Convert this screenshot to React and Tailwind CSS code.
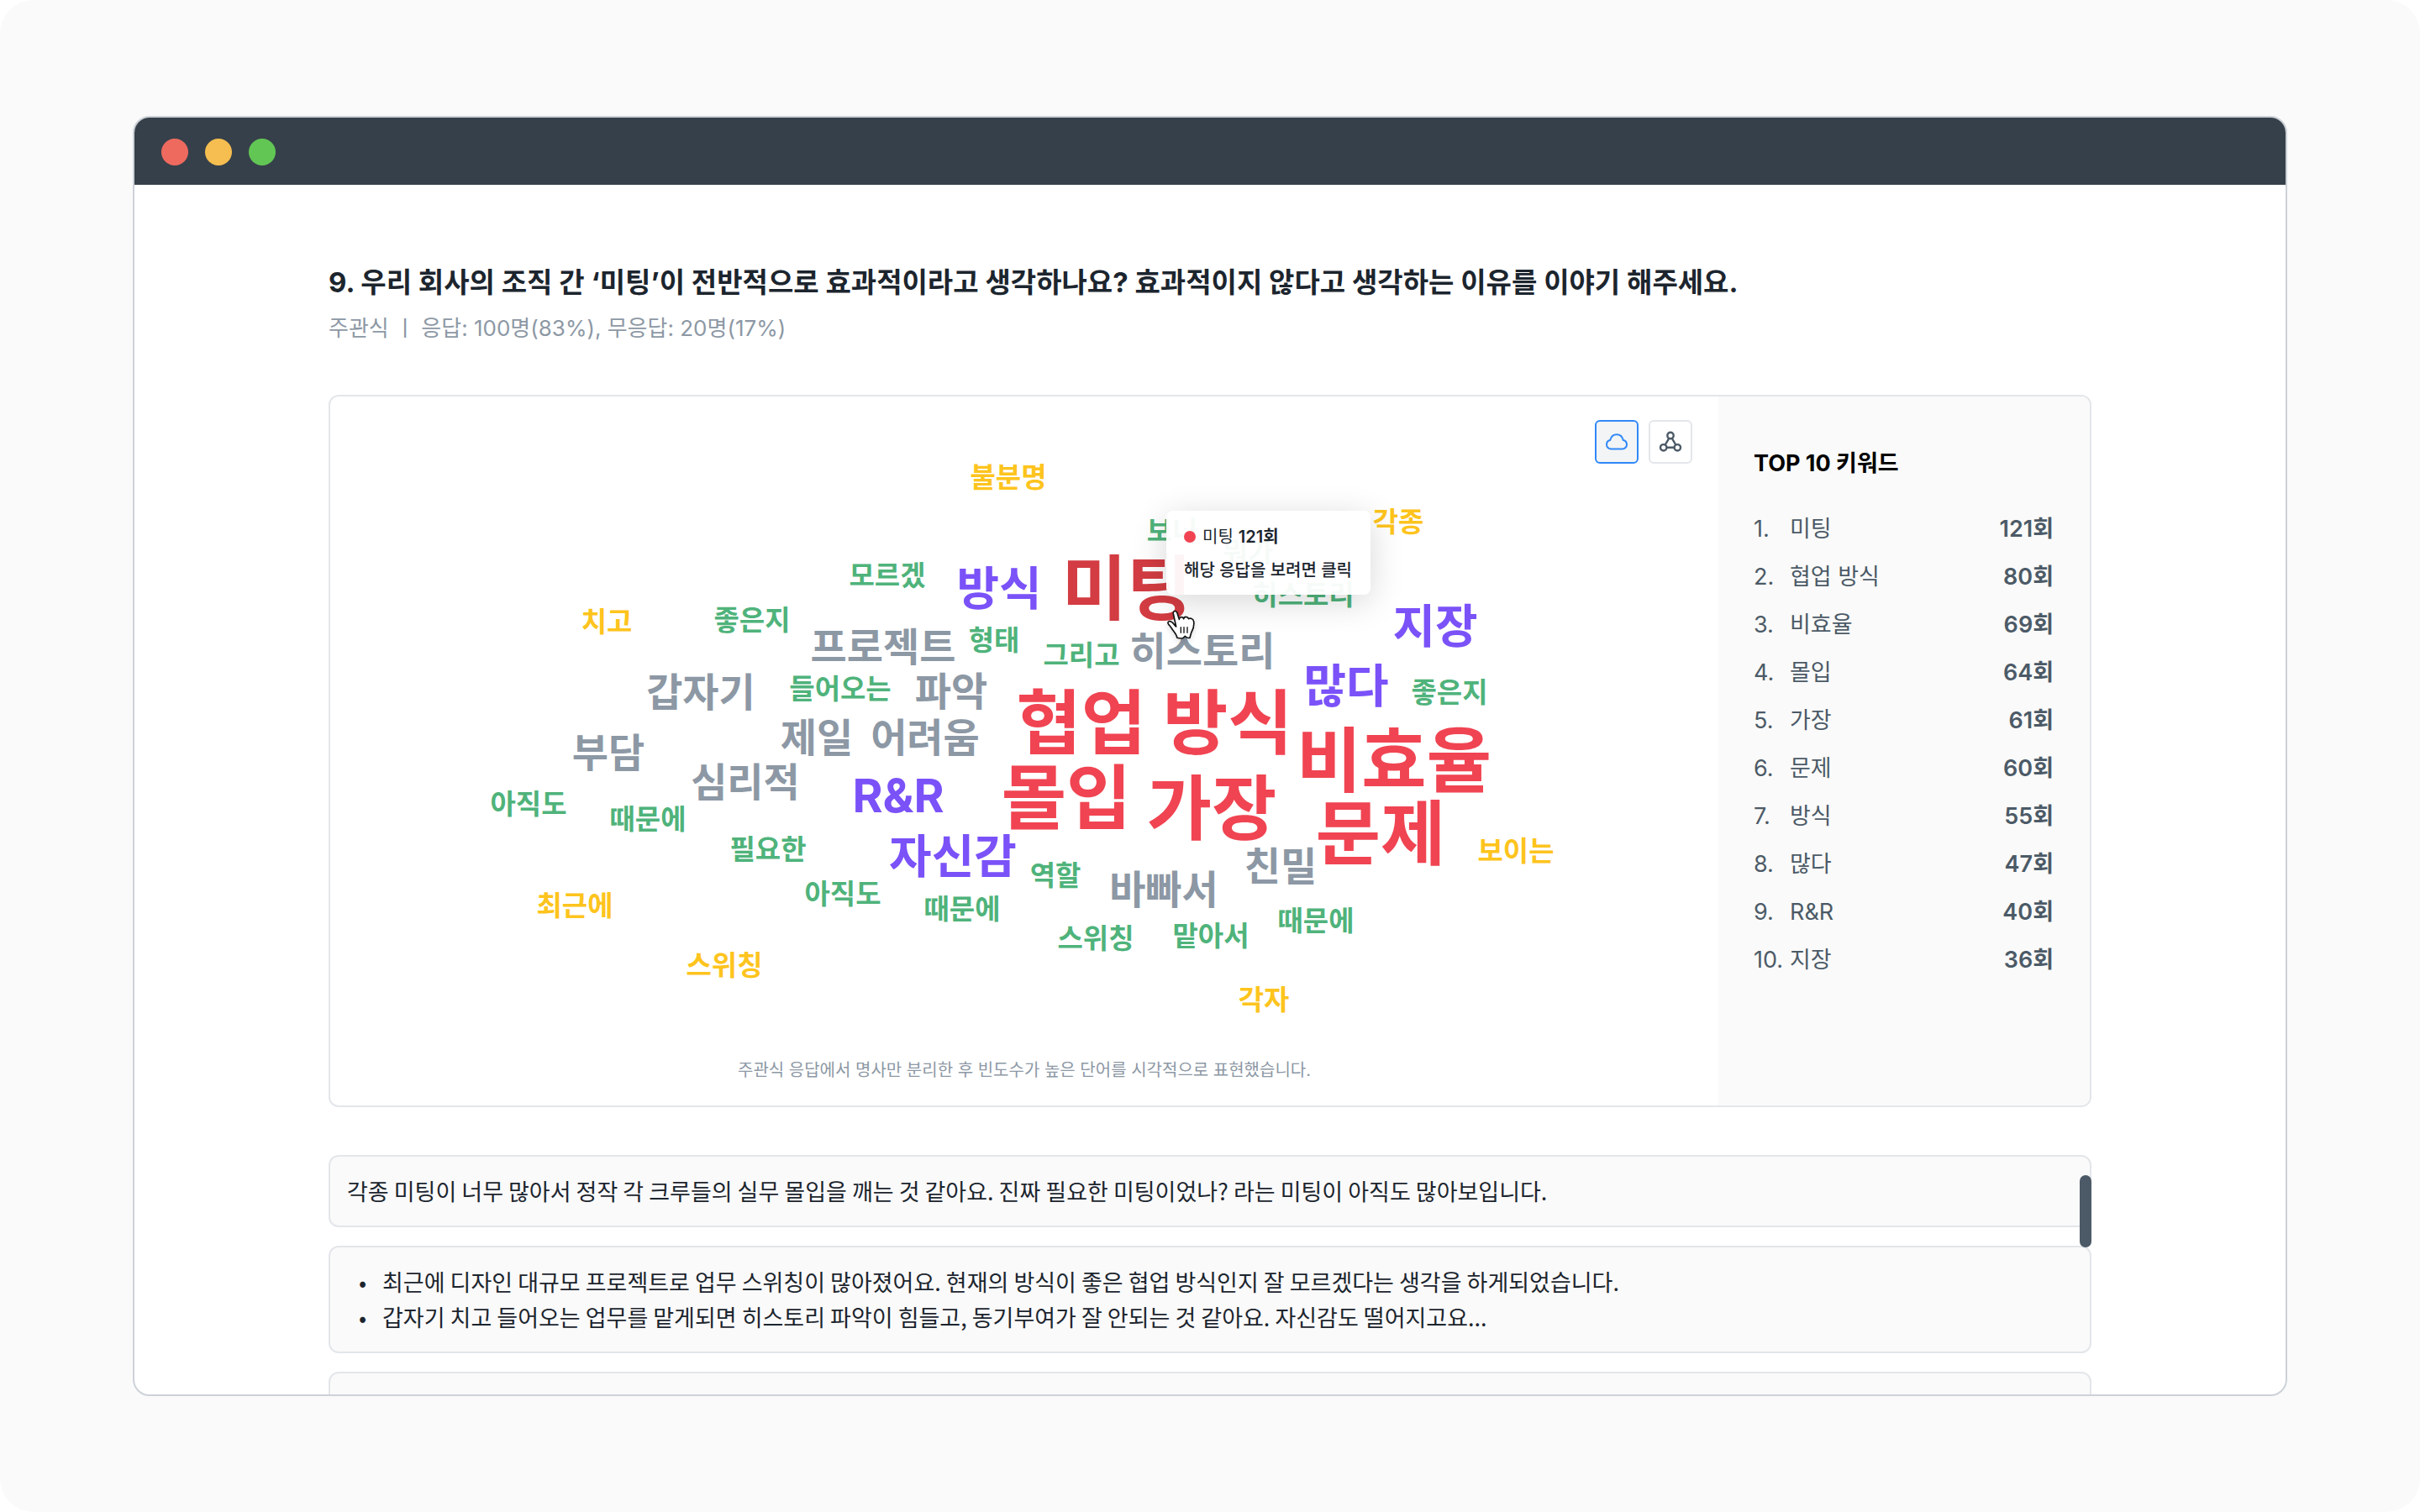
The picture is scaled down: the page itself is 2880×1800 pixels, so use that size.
import React, { useState } from 'react';

const WORD_STYLES = {
    red: 'text-[84px] text-[#f04452]',
    hover: 'text-[84px] text-[#d23c42]',
    purple: 'text-[55px] text-[#7a52f8]',
    gray: 'text-[47px] text-[#8d98a5]',
    green: 'text-[33px] text-[#4fb37b]',
    yellow: 'text-[33px] text-[#fec41d]',
};

// x is measured from the middle of the canvas, y from its top
const WORDS = [
    { text: '불분명', kind: 'yellow', x: -19, y: 96 },
    { text: '보니', kind: 'green', x: 176, y: 160 },
    { text: '뭐가', kind: 'green', x: 266, y: 185 },
    { text: '각종', kind: 'yellow', x: 445, y: 149 },
    { text: '히스토리', kind: 'green', x: 332, y: 236 },
    { text: '모르겠', kind: 'green', x: -163, y: 213 },
    { text: '좋은지', kind: 'green', x: -324, y: 266 },
    { text: '치고', kind: 'yellow', x: -497, y: 268 },
    { text: '형태', kind: 'green', x: -36, y: 290 },
    { text: '그리고', kind: 'green', x: 68, y: 308 },
    { text: '들어오는', kind: 'green', x: -219, y: 348 },
    { text: '좋은지', kind: 'green', x: 506, y: 352 },
    { text: '아직도', kind: 'green', x: -590, y: 485 },
    { text: '때문에', kind: 'green', x: -448, y: 503 },
    { text: '필요한', kind: 'green', x: -305, y: 539 },
    { text: '아직도', kind: 'green', x: -216, y: 592 },
    { text: '때문에', kind: 'green', x: -74, y: 610 },
    { text: '역할', kind: 'green', x: 37, y: 570 },
    { text: '스위칭', kind: 'green', x: 85, y: 645 },
    { text: '맡아서', kind: 'green', x: 222, y: 642 },
    { text: '때문에', kind: 'green', x: 347, y: 624 },
    { text: '최근에', kind: 'yellow', x: -535, y: 606 },
    { text: '스위칭', kind: 'yellow', x: -357, y: 677 },
    { text: '보이는', kind: 'yellow', x: 585, y: 541 },
    { text: '각자', kind: 'yellow', x: 285, y: 718 },
    { text: '프로젝트', kind: 'gray', x: -168, y: 297 },
    { text: '갑자기', kind: 'gray', x: -385, y: 351 },
    { text: '파악', kind: 'gray', x: -87, y: 350 },
    { text: '제일', kind: 'gray', x: -247, y: 405 },
    { text: '어려움', kind: 'gray', x: -118, y: 405 },
    { text: '부담', kind: 'gray', x: -495, y: 423 },
    { text: '심리적', kind: 'gray', x: -332, y: 458 },
    { text: '히스토리', kind: 'gray', x: 212, y: 302 },
    { text: '바빠서', kind: 'gray', x: 166, y: 586 },
    { text: '친밀', kind: 'gray', x: 305, y: 558 },
    { text: '방식', kind: 'purple', x: -30, y: 228 },
    { text: '지장', kind: 'purple', x: 489, y: 273 },
    { text: '많다', kind: 'purple', x: 383, y: 344 },
    { text: 'R&R', kind: 'purple', x: -150, y: 475 },
    { text: '자신감', kind: 'purple', x: -85, y: 547 },
    { text: '미팅', kind: 'hover', x: 122, y: 229 },
    { text: '협업 방식', kind: 'red', x: 155, y: 389 },
    { text: '비효율', kind: 'red', x: 440, y: 434 },
    { text: '몰입', kind: 'red', x: 50, y: 478 },
    { text: '가장', kind: 'red', x: 223, y: 491 },
    { text: '문제', kind: 'red', x: 424, y: 521 },
];

const KEYWORDS = [
    { name: '미팅', count: 121 },
    { name: '협업 방식', count: 80 },
    { name: '비효율', count: 69 },
    { name: '몰입', count: 64 },
    { name: '가장', count: 61 },
    { name: '문제', count: 60 },
    { name: '방식', count: 55 },
    { name: '많다', count: 47 },
    { name: 'R&R', count: 40 },
    { name: '지장', count: 36 },
];

function CloudIcon() {
    return (
        <svg width="28" height="28" viewBox="0 0 28 28" fill="none" stroke="currentColor" strokeWidth="2" strokeLinejoin="round">
            <path d="M7.500 22.500A5.300 5.300 0 0 1 2 17.200c0-2.700 1.700-4.800 4.200-5.300C7.300 8 10.300 5.300 14 5.300s6.700 2.700 7.800 6.600c2.500.5 4.200 2.600 4.200 5.300a5.300 5.300 0 0 1-5.500 5.300z" />
        </svg>
    );
}

function NetworkIcon() {
    return (
        <svg width="28" height="28" viewBox="0 0 28 28" fill="none" stroke="currentColor" strokeWidth="2.400">
            <circle cx="14" cy="6.500" r="3.700" />
            <circle cx="5.700" cy="20.800" r="3.700" />
            <circle cx="22.300" cy="20.800" r="3.700" />
            <path d="M12.200 9.800 7.700 17.500M15.800 9.800l4.500 7.700M9.500 20.800h9" />
        </svg>
    );
}

function HandCursor() {
    return (
        <svg width="34" height="36" viewBox="0 0 102 108" fill="none" stroke="#111" strokeWidth="5" strokeLinejoin="round" strokeLinecap="round" className="drop-shadow-md">
            <path
                d="M32 60 22 14C20 3 32 1 36 11l7 23c0-9 13-11 16-2 1-9 14-9 18 0 5-4 17 0 18 10 3 18-3 28-9 40l-5 18c-8 2-12 0-17-6-4 6-8 8-12 8s-10 0-16-2c-2-12-10-20-16-28C14 62 8 56 4 50c-4-8 4-12 12-7 6 4 10 11 16 17z"
                fill="#fff"
            />
            <path d="M49 62v20M60 62v20M72 62v20" strokeWidth="4" />
        </svg>
    );
}

function Tooltip() {
    return (
        <div className="absolute top-[136px] left-1/2 ml-[169px] flex h-[100px] w-[243px] flex-col justify-center rounded-lg bg-white/95 px-[21px] pt-[2px] text-[20px] text-[#1c252e] shadow-[0_8px_40px_rgba(0,0,0,0.16)]">
            <div className="flex h-10 items-center">
                <span className="mr-2 size-[14px] rounded-full bg-[#f04452]" />
                <span className="mr-[6px]">미팅</span>
                <strong className="font-semibold">121회</strong>
            </div>
            <p className="h-10 leading-10 font-medium whitespace-nowrap">해당 응답을 보려면 클릭</p>
        </div>
    );
}

function WordCloud() {
    const [view, setView] = useState('cloud');

    return (
        <div className="relative min-w-0 flex-1">
            {/* View toggle */}
            <div className="flex justify-end gap-3 pt-7 pr-[31px]">
                <button
                    aria-label="워드 클라우드"
                    onClick={() => setView('cloud')}
                    className={`flex size-[52px] items-center justify-center rounded-md border-2 ${view === 'cloud' ? 'border-[#3088f8] bg-[#f2f4f6] text-[#3088f8]' : 'border-[#e3e6ea] text-[#4c5a67]'}`}
                >
                    <CloudIcon />
                </button>
                <button
                    aria-label="네트워크"
                    onClick={() => setView('network')}
                    className={`flex size-[52px] items-center justify-center rounded-md border-2 ${view === 'network' ? 'border-[#3088f8] bg-[#f2f4f6] text-[#3088f8]' : 'border-[#e3e6ea] text-[#4c5a67]'}`}
                >
                    <NetworkIcon />
                </button>
            </div>

            {/* Words */}
            {WORDS.map((word, i) => (
                <button
                    key={i}
                    className={`absolute -translate-x-1/2 -translate-y-1/2 leading-none font-bold whitespace-nowrap ${WORD_STYLES[word.kind]}`}
                    style={{ left: `calc(50% + ${word.x}px)`, top: word.y }}
                >
                    {word.text}
                </button>
            ))}

            <Tooltip />
            <div className="absolute top-[254px] left-1/2 ml-[170px]">
                <HandCursor />
            </div>

            <p className="absolute inset-x-0 bottom-[22px] text-center text-[20px] leading-10 text-[#8d98a5]">
                주관식 응답에서 명사만 분리한 후 빈도수가 높은 단어를 시각적으로 표현했습니다.
            </p>
        </div>
    );
}

function KeywordRanking() {
    return (
        <aside className="w-[442px] shrink-0 bg-[#fafafa] pt-[60px] pr-[43px] pl-[42px]">
            <h2 className="text-[27px] leading-10 font-bold text-black">TOP 10 키워드</h2>
            <ol className="mt-[30px]">
                {KEYWORDS.map((keyword, i) => (
                    <li key={keyword.name} className="flex h-[57px] items-center text-[27px] text-[#4c5a67]">
                        <span className="w-[43px] whitespace-nowrap">{i + 1}.</span>
                        <span className="flex-1">{keyword.name}</span>
                        <strong className="font-semibold">{keyword.count}회</strong>
                    </li>
                ))}
            </ol>
        </aside>
    );
}

export default function App() {
    return (
        <div className="h-screen bg-white font-['Inter','Noto_Sans_CJK_KR',sans-serif]">
            <div className="h-full rounded-[40px] bg-[#fafafa] px-[158px] py-[138px]">
                <div className="flex h-full flex-col overflow-hidden rounded-[20px] border-2 border-[#cdd2d8] bg-white">
                    {/* Title bar */}
                    <div className="flex h-20 shrink-0 items-center gap-5 bg-[#36404a] px-8 pt-[2px]">
                        <span className="size-8 rounded-full bg-[#ee6a5f]" />
                        <span className="size-8 rounded-full bg-[#f6be50]" />
                        <span className="size-8 rounded-full bg-[#62c655]" />
                    </div>

                    <main className="min-h-0 flex-1 px-[231px] pt-[91px]">
                        <h1 className="text-[33px] leading-[50px] font-bold text-[#1c252e]">
                            9. 우리 회사의 조직 간 ‘미팅’이 전반적으로 효과적이라고 생각하나요? 효과적이지 않다고 생각하는 이유를 이야기 해주세요.
                        </h1>
                        <p className="mt-[10px] text-[26px] leading-10 text-[#8d98a5]">
                            주관식 ㅣ 응답: 100명(83%), 무응답: 20명(17%)
                        </p>

                        <section className="mt-[59px] flex h-[848px] overflow-hidden rounded-xl border-2 border-[#e3e6ea]">
                            <WordCloud />
                            <KeywordRanking />
                        </section>

                        {/* Responses */}
                        <div className="relative mt-[57px] flex flex-col gap-[22px] font-['Noto_Sans_CJK_KR',sans-serif] text-[27px] leading-[42px] text-[#1c252e]">
                            <div className="rounded-xl border-2 border-[#e3e6ea] bg-[#fafafa] px-5 py-5">
                                각종 미팅이 너무 많아서 정작 각 크루들의 실무 몰입을 깨는 것 같아요. 진짜 필요한 미팅이었나? 라는 미팅이 아직도 많아보입니다.
                            </div>
                            <ul className="rounded-xl border-2 border-[#e3e6ea] bg-[#fafafa] px-5 py-5">
                                <li className="flex">
                                    <span className="w-[42px] pl-[14px]">•</span>
                                    최근에 디자인 대규모 프로젝트로 업무 스위칭이 많아졌어요. 현재의 방식이 좋은 협업 방식인지 잘 모르겠다는 생각을 하게되었습니다.
                                </li>
                                <li className="flex">
                                    <span className="w-[42px] pl-[14px]">•</span>
                                    갑자기 치고 들어오는 업무를 맡게되면 히스토리 파악이 힘들고, 동기부여가 잘 안되는 것 같아요. 자신감도 떨어지고요...
                                </li>
                            </ul>
                            <div className="h-[86px] rounded-xl border-2 border-[#e3e6ea] bg-[#fafafa]" />
                            <div className="absolute top-6 right-0 h-[86px] w-[14px] rounded-full bg-[#4c5a67]" />
                        </div>
                    </main>
                </div>
            </div>
        </div>
    );
}
